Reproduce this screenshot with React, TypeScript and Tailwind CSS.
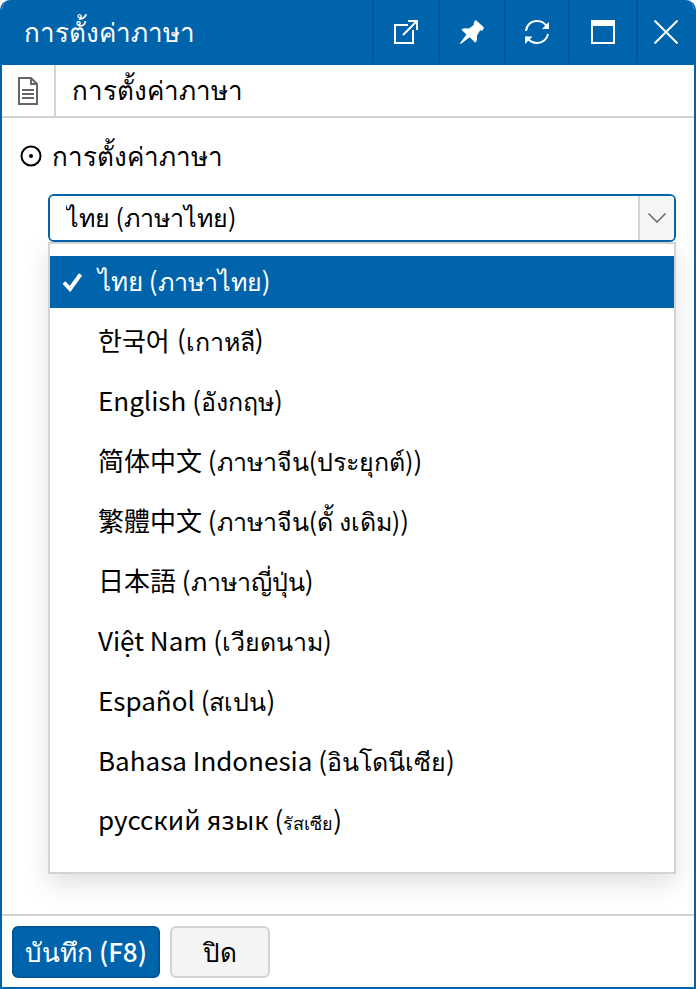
import React, { useState } from 'react';

interface LanguageOption {
  code: string;
  name: string;
  thaiName: string;
  small?: boolean;
}

const languages: LanguageOption[] = [
  { code: 'th', name: 'ไทย', thaiName: 'ภาษาไทย' },
  { code: 'ko', name: '한국어', thaiName: 'เกาหลี' },
  { code: 'en', name: 'English', thaiName: 'อังกฤษ' },
  { code: 'zh-CN', name: '简体中文', thaiName: 'ภาษาจีน(ประยุกต์)' },
  { code: 'zh-TW', name: '繁體中文', thaiName: 'ภาษาจีน(ดั้ งเดิม)' },
  { code: 'ja', name: '日本語', thaiName: 'ภาษาญี่ปุ่น' },
  { code: 'vi', name: 'Việt Nam', thaiName: 'เวียดนาม' },
  { code: 'es', name: 'Español', thaiName: 'สเปน' },
  { code: 'id', name: 'Bahasa Indonesia', thaiName: 'อินโดนีเซีย' },
  { code: 'ru', name: 'русский язык', thaiName: 'รัสเซีย', small: true }
];

function OpenIcon() {
  return (
    <svg className="h-6 w-6" viewBox="0 0 24 24" fill="none" stroke="currentColor" strokeWidth="2">
      <path d="M14 5H1v18h18V10" />
      <path d="M9 15L22.500 1.500" />
      <path d="M14 1h9v9" />
    </svg>
  );
}

function PinIcon() {
  return (
    <svg className="h-6 w-6" viewBox="0 0 24 24" fill="currentColor">
      <path d="M15.800 0L24 7.600 22.600 10.400 20 10.600 17 15.500 17 20 15.400 22.800 9.600 17.200 0.800 24 0 23.200 6.400 14.600 1.200 9.600 4 8.200 9 8.400 13.600 5 14 2z" />
    </svg>
  );
}

function RefreshIcon() {
  return (
    <svg className="h-6 w-6" viewBox="0 0 24 24" fill="none" stroke="currentColor" strokeWidth="2">
      <path d="M1 11C1.500 5 6 1 12 1c4.500 0 8 2 10 6" />
      <path d="M23 14c-1 5.500-5.500 9-11 9-4.500 0-8-2-10-6" />
      <path d="M24 2v7h-7z" fill="currentColor" stroke="none" />
      <path d="M0 24v-7.500h7.500z" fill="currentColor" stroke="none" />
    </svg>
  );
}

function WindowIcon() {
  return (
    <svg className="h-6 w-6" viewBox="0 0 24 24" fill="none" stroke="currentColor" strokeWidth="2">
      <path d="M1 1h22v22H1z" />
      <path d="M0 3h24" strokeWidth="6" />
    </svg>
  );
}

function CloseIcon() {
  return (
    <svg className="h-6 w-6" viewBox="0 0 24 24" fill="none" stroke="currentColor" strokeWidth="2">
      <path d="M.5.5l23 23M23.500.5l-23 23" />
    </svg>
  );
}

function DocumentIcon() {
  return (
    <svg className="h-7 w-5" viewBox="0 0 20 28" fill="none" stroke="#666" strokeWidth="2">
      <path d="M1 1h12l6 6v20H1z" />
      <path d="M13 1v6h6" />
      <path d="M4 13h12M4 17h12M4 21h12" />
    </svg>
  );
}

const windowActions = [
  { label: 'เปิดหน้าต่างใหม่', icon: OpenIcon, width: 'w-[66px]' },
  { label: 'ปักหมุด', icon: PinIcon, width: 'w-[66px]' },
  { label: 'รีเฟรช', icon: RefreshIcon, width: 'w-[64px]' },
  { label: 'ขยาย', icon: WindowIcon, width: 'w-[68px]' },
  { label: 'ปิดหน้าต่าง', icon: CloseIcon, width: 'w-[58px]' }
];

export default function App() {
  const [language, setLanguage] = useState('th');

  return (
    <div className="flex min-h-screen flex-col overflow-hidden rounded-t-[10px] border-2 border-t-0 border-[#0064ac] bg-white font-['Noto_Sans_CJK_KR','Noto_Sans',sans-serif] text-[26px] leading-9 text-black">
      {/* Title bar */}
      <header className="flex h-[65px] shrink-0 bg-[#0064ac] text-white">
        <h1 className="flex flex-1 items-center pb-1 pl-[22px] font-medium">การตั้งค่าภาษา</h1>
        {windowActions.map(({ label, icon: Icon, width }) => (
          <button
            key={label}
            type="button"
            aria-label={label}
            className={`flex h-[63px] items-center justify-center border-l-2 border-[#005596] ${width}`}
          >
            <Icon />
          </button>
        ))}
      </header>

      {/* Page name */}
      <div className="flex h-[53px] shrink-0 border-b-2 border-[#d3d3d3]">
        <div className="flex w-[54px] items-center justify-center border-r-2 border-[#d3d3d3]">
          <DocumentIcon />
        </div>
        <h2 className="flex items-center pb-1 pl-4">การตั้งค่าภาษา</h2>
      </div>

      <main className="flex-1 pr-[18px] pb-10 pl-[18px]">
        <label htmlFor="language" className="flex h-[76px] items-center gap-[10px]">
          <svg className="h-[22px] w-[22px]" viewBox="0 0 22 22" fill="none" stroke="currentColor" strokeWidth="2">
            <circle cx="11" cy="11" r="9.500" />
            <circle cx="11" cy="11" r="2" fill="currentColor" stroke="none" />
          </svg>
          <span className="pb-0.5">การตั้งค่าภาษา</span>
        </label>

        <div className="pl-7">
          <div className="grid h-12 overflow-hidden rounded-md border-2 border-[#0064ac]">
            <select
              id="language"
              value={language}
              onChange={(e) => setLanguage(e.target.value)}
              className="col-start-1 row-start-1 w-full appearance-none bg-white pr-10 pb-1 pl-4 text-[25px] outline-none"
            >
              {languages.map((item) => (
                <option key={item.code} value={item.code}>
                  {item.name} ({item.thaiName})
                </option>
              ))}
            </select>
            <span className="pointer-events-none col-start-1 row-start-1 flex w-9 items-center justify-center justify-self-end border-l-2 border-[#d3d3d3] bg-[#f5f5f5]">
              <svg className="h-[10px] w-[18px]" viewBox="0 0 18 10" fill="none" stroke="#666" strokeWidth="1.500">
                <path d="M.5.5L9 9l8.500-8.500" />
              </svg>
            </span>
          </div>

          <div
            role="listbox"
            aria-label="การตั้งค่าภาษา"
            className="flex flex-col gap-2 border-2 border-[#d3d3d3] bg-white pt-3 pb-6 shadow-[0_10px_24px_rgba(0,0,0,0.12)]"
          >
            {languages.map((item) => {
              const selected = item.code === language;
              return (
                <button
                  key={item.code}
                  type="button"
                  role="option"
                  aria-selected={selected}
                  onClick={() => setLanguage(item.code)}
                  className={`flex h-[52px] items-center text-left ${selected ? 'bg-[#0064ac] text-white' : ''}`}
                >
                  <span className="flex w-12 shrink-0 pl-3">
                    {selected && (
                      <svg className="h-5 w-5" viewBox="0 0 20 20" fill="none" stroke="currentColor" strokeWidth="4">
                        <path d="M2 10.500L8 17 18.500 2.500" />
                      </svg>
                    )}
                  </span>
                  <span lang={item.code} className="pb-1 whitespace-pre">
                    {item.name} (<span className={item.small ? 'text-[18px]' : 'text-[25px]'}>{item.thaiName}</span>)
                  </span>
                </button>
              );
            })}
          </div>
        </div>
      </main>

      <footer className="flex shrink-0 gap-[10px] border-t-2 border-[#d3d3d3] px-[10px] pt-[10px] pb-[9px]">
        <button type="button" className="h-[52px] w-[148px] rounded-md border-2 border-[#005596] bg-[#0064ac] pb-0.5 font-medium text-white">
          บันทึก (F8)
        </button>
        <button type="button" className="h-[52px] w-[100px] rounded-md border-2 border-[#d3d3d3] bg-[#f4f4f4] pb-0.5">
          ปิด
        </button>
      </footer>
    </div>
  );
}
